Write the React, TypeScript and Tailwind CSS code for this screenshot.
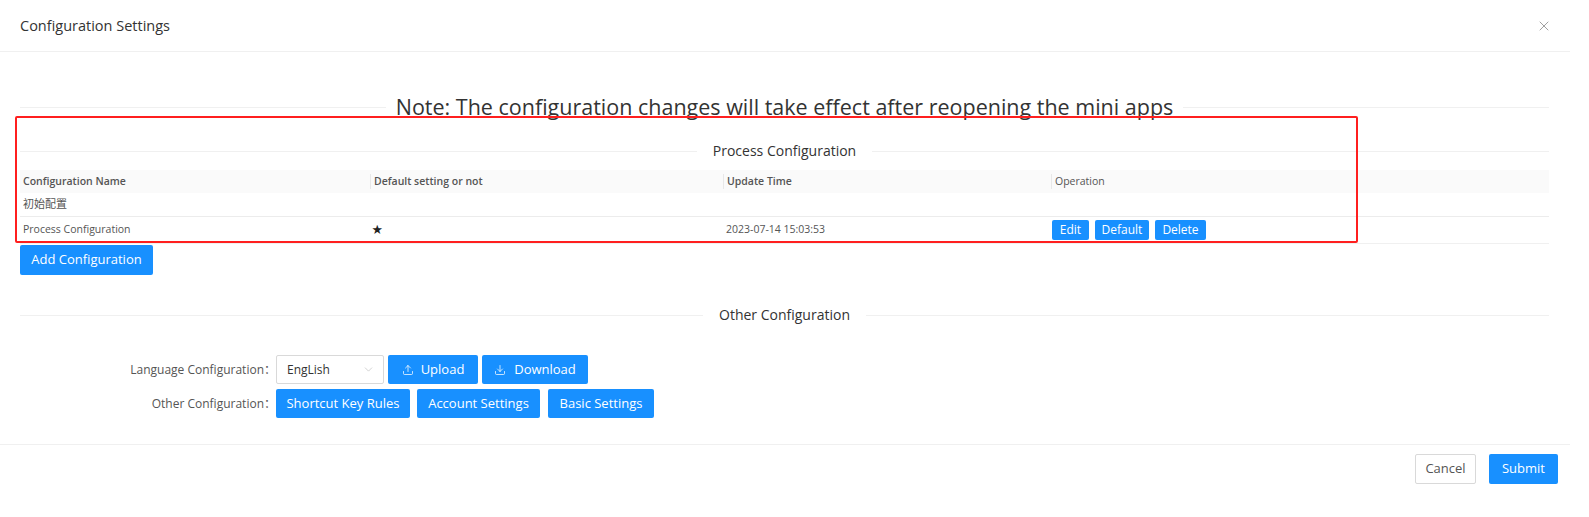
import { X, Upload, Download, ChevronDown } from 'lucide-react';

const font = { fontFamily: '"Open Sans", "Noto Sans CJK SC", sans-serif' };

const Divider = ({ title, big }: { title: string; big?: boolean }) => (
    <div className="flex items-center">
        <div className="h-px flex-1 bg-[#f0f0f0]"></div>
        <span className={big ? 'px-[10px] text-[21.5px] text-[#333] leading-[24px]' : 'px-4 text-[14px] font-medium text-[#333] leading-[20px]'}>
            {title}
        </span>
        <div className="h-px flex-1 bg-[#f0f0f0]"></div>
    </div>
);

const Btn = ({ children, className = '' }: any) => (
    <button className={`flex items-center justify-center rounded-[2px] bg-[#1890ff] text-white ${className}`}>
        {children}
    </button>
);

const cols = ['w-[350px]', 'w-[353px]', 'w-[328px]', 'flex-1'];

function App() {
    return (
        <div className="relative w-[1570px] h-[517px] bg-white text-[#333]" style={font}>
            {/* red annotation box */}
            <div className="absolute left-[15px] top-[116px] w-[1343px] h-[127px] border-2 border-[#ff1f1f] rounded-[2px] pointer-events-none z-10"></div>

            {/* header */}
            <div className="h-[52px] flex items-center justify-between pl-5 pr-[18px] border-b border-[#f0f0f0]">
                <span className="text-[14.5px] font-medium text-[#333]">Configuration Settings</span>
                <X className="w-[16px] h-[16px] text-[#999]" strokeWidth={1.4} />
            </div>

            {/* body */}
            <div className="pl-5 pr-[21px] pt-[43px]">
                <Divider title="Note: The configuration changes will take effect after reopening the mini apps" big />

                <div className="mt-[22px]">
                    <Divider title="Process Configuration" />
                </div>

                <div className="mt-[9px] text-[10.5px]">
                    <div className="flex h-[23px] items-center bg-[#fafafa] font-semibold text-[#555]">
                        {['Configuration Name', 'Default setting or not', 'Update Time', 'Operation'].map((t, i) => (
                            <div key={t} className={`${cols[i]} pl-[3px] ${i > 0 ? 'border-l border-[#e8e8e8]' : ''} ${i === 3 ? 'font-normal' : ''}`}>
                                {t}
                            </div>
                        ))}
                    </div>
                    <div className="flex h-[24px] items-center border-b border-[#ececec] text-[#555]">
                        <div className={`${cols[0]} pl-[3px] text-[11px]`}>初始配置</div>
                    </div>
                    <div className="flex h-[27px] items-center border-b border-[#f0f0f0] text-[#555]">
                        <div className={`${cols[0]} pl-[3px]`}>Process Configuration</div>
                        <div className={`${cols[1]} pl-[2px] text-[#222]`}>★</div>
                        <div className={`${cols[2]} pl-[3px]`}>2023-07-14 15:03:53</div>
                        <div className={`${cols[3]} flex gap-[6px] pl-[1px]`}>
                            <Btn className="w-[37px] h-[20px] text-[12px]">Edit</Btn>
                            <Btn className="w-[54px] h-[20px] text-[12px]">Default</Btn>
                            <Btn className="w-[51px] h-[20px] text-[12px]">Delete</Btn>
                        </div>
                    </div>
                </div>

                <Btn className="mt-[1px] w-[133px] h-[30px] text-[13px]">Add Configuration</Btn>

                <div className="mt-[30px]">
                    <Divider title="Other Configuration" />
                </div>

                <div className="mt-[30px] flex flex-col gap-[5px] text-[12px]">
                    <div className="flex items-center">
                        <span className="w-[256px] text-right text-[#555]">Language Configuration：</span>
                        <div className="w-[108px] h-[29px] border border-[#d9d9d9] rounded-[2px] flex items-center justify-between pl-[10px] pr-[8px]">
                            <span className="text-[#333]">EngLish</span>
                            <ChevronDown className="w-[13px] h-[13px] text-[#c0c0c0]" strokeWidth={1.3} />
                        </div>
                        <Btn className="ml-[4px] w-[90px] h-[29px] text-[13px] gap-[7px]">
                            <Upload className="w-[12px] h-[12px]" strokeWidth={1.5} />Upload
                        </Btn>
                        <Btn className="ml-[4px] w-[106px] h-[29px] text-[13px] gap-[8px]">
                            <Download className="w-[12px] h-[12px]" strokeWidth={1.5} />Download
                        </Btn>
                    </div>
                    <div className="flex items-center">
                        <span className="w-[256px] text-right text-[#555]">Other Configuration：</span>
                        <Btn className="w-[134px] h-[29px] text-[13px]">Shortcut Key Rules</Btn>
                        <Btn className="ml-[7px] w-[123px] h-[29px] text-[13px]">Account Settings</Btn>
                        <Btn className="ml-[8px] w-[106px] h-[29px] text-[13px]">Basic Settings</Btn>
                    </div>
                </div>
            </div>

            {/* footer */}
            <div className="mt-[26px] border-t border-[#f0f0f0] flex justify-end gap-[13px] pr-[12px] pt-[9px]">
                <button className="w-[61px] h-[30px] border border-[#d9d9d9] rounded-[2px] text-[13px] text-[#555] bg-white">Cancel</button>
                <Btn className="w-[69px] h-[30px] text-[13px]">Submit</Btn>
            </div>
        </div>
    );
}

export default App;
